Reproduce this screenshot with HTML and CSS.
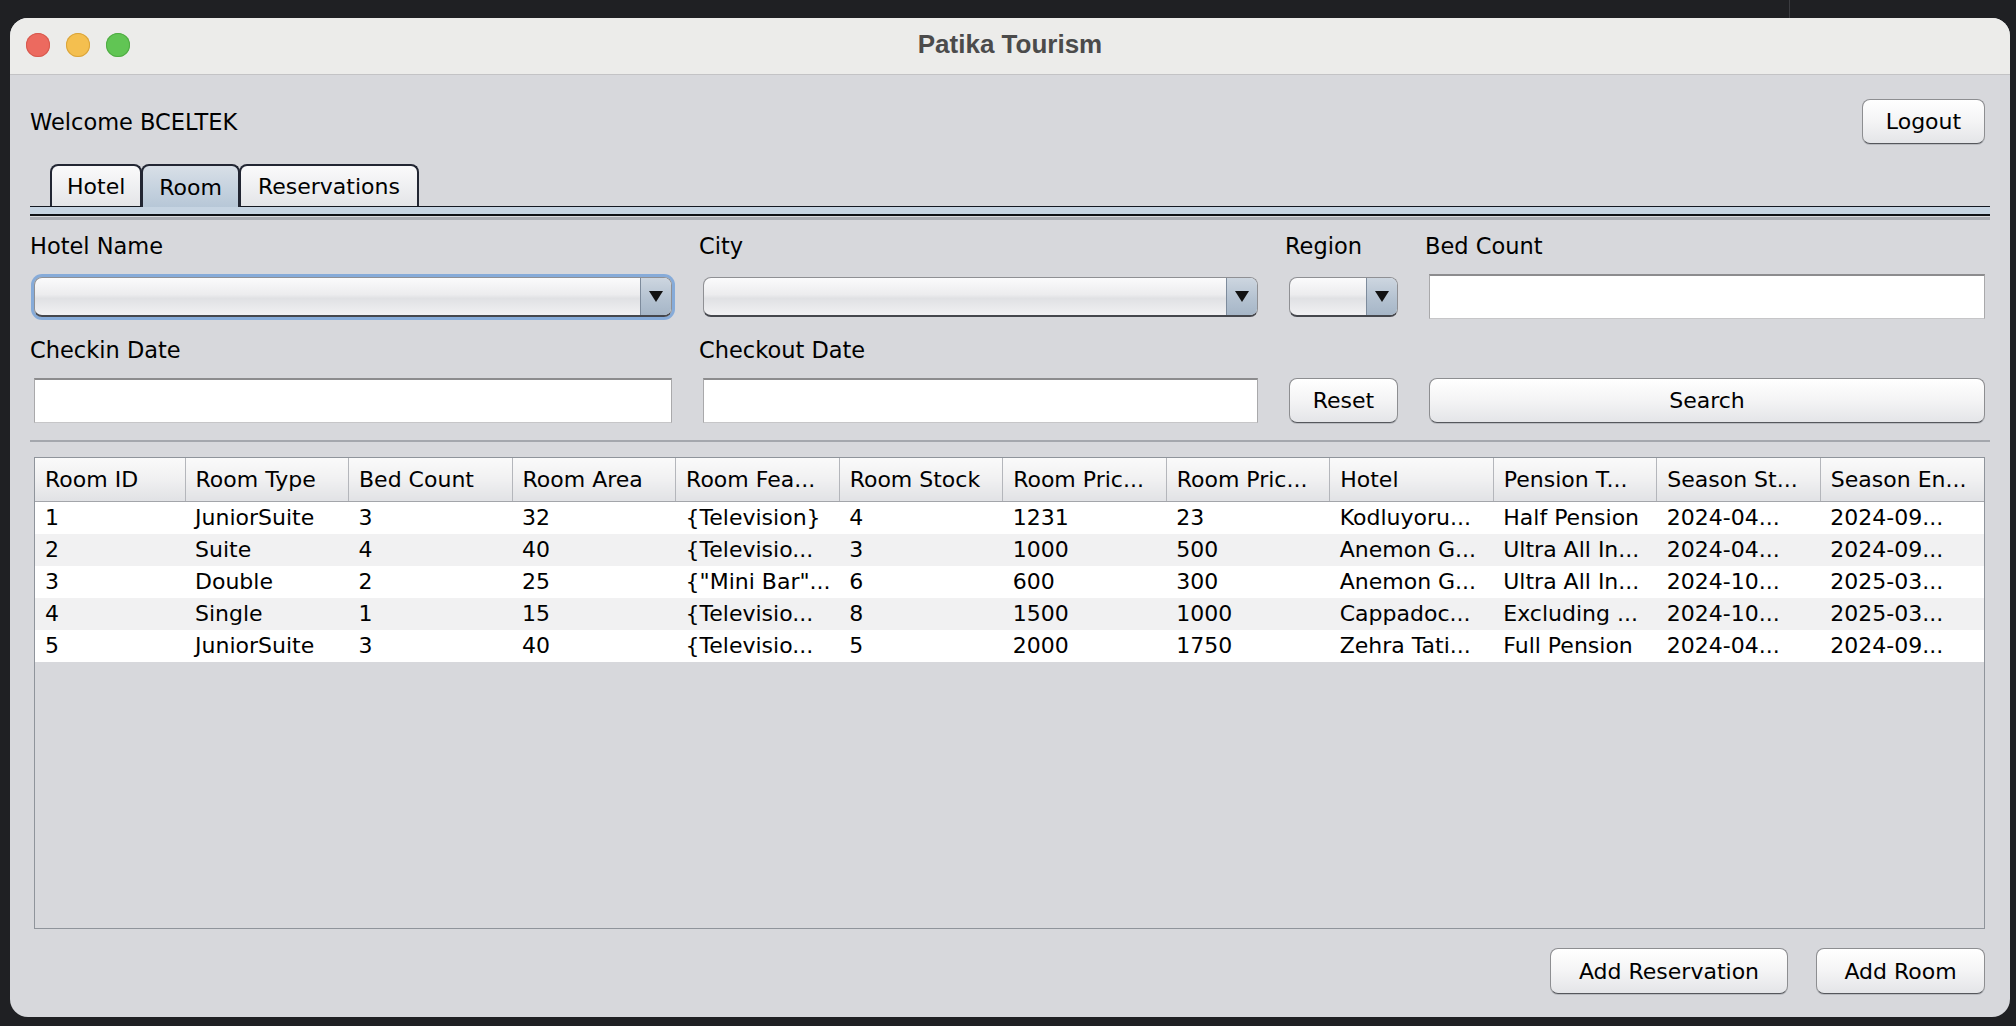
FILE: index.html
```html
<!DOCTYPE html>
<html lang="en">
<head>
<meta charset="utf-8">
<title>Patika Tourism</title>
<link rel="stylesheet" href="styles.css">
</head>
<body>
<div class="window">
  <div class="titlebar">
    <div class="lights">
      <span class="light red"></span>
      <span class="light yellow"></span>
      <span class="light green"></span>
    </div>
    <div class="title">Patika Tourism</div>
  </div>
  <div class="content">
    <div class="header-row">
      <div class="welcome">Welcome BCELTEK</div>
      <button class="btn logout">Logout</button>
    </div>

    <div class="tabs">
      <div class="tab">Hotel</div>
      <div class="tab sel">Room</div>
      <div class="tab">Reservations</div>
    </div>
    <div class="tabband"></div>

    <div class="form">
      <div class="lbl">Hotel Name</div>
      <div class="lbl">City</div>
      <div class="lbl">Region</div>
      <div class="lbl">Bed Count</div>

      <div class="combo focus"><span class="arrow"><i></i></span></div>
      <div class="combo"><span class="arrow"><i></i></span></div>
      <div class="combo"><span class="arrow"><i></i></span></div>
      <div class="field last"></div>

      <div class="lbl lbl2">Checkin Date</div>
      <div class="lbl lbl2">Checkout Date</div>
      <div></div>
      <div></div>

      <div class="field"></div>
      <div class="field"></div>
      <button class="btn ctl">Reset</button>
      <button class="btn ctl last">Search</button>
    </div>

    <div class="sep"></div>

    <div class="tablebox">
      <table class="grid">
        <colgroup>
          <col class="c-first">
          <col><col><col><col><col><col><col><col><col><col><col>
        </colgroup>
        <thead>
          <tr>
            <th>Room ID</th><th>Room Type</th><th>Bed Count</th><th>Room Area</th>
            <th>Room Fea...</th><th>Room Stock</th><th>Room Pric...</th><th>Room Pric...</th>
            <th>Hotel</th><th>Pension T...</th><th>Season St...</th><th>Season En...</th>
          </tr>
        </thead>
        <tbody>
          <tr>
            <td>1</td><td>JuniorSuite</td><td>3</td><td>32</td><td>{Television}</td><td>4</td>
            <td>1231</td><td>23</td><td>Kodluyoru...</td><td>Half Pension</td><td>2024-04...</td><td>2024-09...</td>
          </tr>
          <tr>
            <td>2</td><td>Suite</td><td>4</td><td>40</td><td>{Televisio...</td><td>3</td>
            <td>1000</td><td>500</td><td>Anemon G...</td><td>Ultra All In...</td><td>2024-04...</td><td>2024-09...</td>
          </tr>
          <tr>
            <td>3</td><td>Double</td><td>2</td><td>25</td><td>{"Mini Bar"...</td><td>6</td>
            <td>600</td><td>300</td><td>Anemon G...</td><td>Ultra All In...</td><td>2024-10...</td><td>2025-03...</td>
          </tr>
          <tr>
            <td>4</td><td>Single</td><td>1</td><td>15</td><td>{Televisio...</td><td>8</td>
            <td>1500</td><td>1000</td><td>Cappadoc...</td><td>Excluding ...</td><td>2024-10...</td><td>2025-03...</td>
          </tr>
          <tr>
            <td>5</td><td>JuniorSuite</td><td>3</td><td>40</td><td>{Televisio...</td><td>5</td>
            <td>2000</td><td>1750</td><td>Zehra Tati...</td><td>Full Pension</td><td>2024-04...</td><td>2024-09...</td>
          </tr>
        </tbody>
      </table>
    </div>

    <div class="actions">
      <button class="btn add-res">Add Reservation</button>
      <button class="btn add-room">Add Room</button>
    </div>
  </div>
</div>
</body>
</html>
```
FILE: styles.css
```css
* { box-sizing: border-box; }

html, body {
  margin: 0;
  padding: 0;
}

body {
  width: 2016px;
  height: 1026px;
  overflow: hidden;
  background:
    linear-gradient(to right, transparent 1789px, #3b3c40 1789px, #3b3c40 1790px, transparent 1790px) no-repeat 0 0 / 100% 18px,
    #1f2023;
  font-family: "DejaVu Sans", "Liberation Sans", sans-serif;
  font-size: 22px;
  color: #000;
}

.window {
  margin: 18px 0 0 10px;
  width: 2000px;
  height: 999px;
  border-radius: 18px;
  background: #d7d8dc;
  overflow: hidden;
  display: flex;
  flex-direction: column;
}

/* title bar */
.titlebar {
  height: 57px;
  flex: none;
  background: #ececea;
  border-bottom: 1px solid #c3c3c5;
  position: relative;
  display: flex;
  align-items: center;
  justify-content: center;
}

.lights {
  position: absolute;
  left: 16px;
  top: 15px;
  display: flex;
  gap: 16px;
}

.light {
  width: 24px;
  height: 24px;
  border-radius: 50%;
  display: block;
}
.light.red { background: #ec6a5f; box-shadow: inset 0 0 0 1px #d65a4f; }
.light.yellow { background: #f4bf4f; box-shadow: inset 0 0 0 1px #d9a43c; }
.light.green { background: #61c554; box-shadow: inset 0 0 0 1px #50ab44; }

.title {
  font-family: "Liberation Sans", Arial, sans-serif;
  font-weight: bold;
  font-size: 26px;
  color: #4b4b4b;
  padding-bottom: 3px;
}

/* content */
.content {
  flex: 1;
  display: flex;
  flex-direction: column;
  padding: 24px 20px 23px 20px;
}

.header-row {
  height: 45px;
  display: flex;
  align-items: center;
  justify-content: space-between;
}

.welcome {
  font-size: 22.5px;
}

.btn {
  font-family: "DejaVu Sans", "Liberation Sans", sans-serif;
  font-size: 22px;
  color: #000;
  background: linear-gradient(#ffffff, #f4f4f5 50%, #e4e5e8);
  border: 1px solid #8d8e91;
  border-bottom-color: #55575c;
  border-radius: 8px;
  box-shadow: 0 1px 0 #b9bbc0;
  padding: 0;
  margin: 0;
}

.logout {
  width: 123px;
  height: 45px;
  margin-right: 5px;
}

/* tabs */
.tabs {
  margin-top: 20px;
  height: 42px;
  display: flex;
  align-items: flex-start;
  padding-left: 20px;
  position: relative;
  z-index: 1;
}

.tab {
  height: 42px;
  padding: 1px 15px 0 15px;
  border: 2px solid #222633;
  border-bottom: none;
  border-radius: 8px 8px 0 0;
  background: linear-gradient(#fafafb, #e4e5e8);
  display: flex;
  align-items: center;
  font-size: 22px;
}

.tab + .tab { margin-left: -1px; }

.tab.sel {
  height: 43px;
  margin-bottom: -1px;
  padding: 1px 16px 0 16px;
  background: linear-gradient(#d8dfe7, #c4d1de 60%, #b7c7d7);
  position: relative;
  z-index: 2;
}

.tab:last-child { padding: 1px 17px 0 17px; }

.tabband {
  height: 10px;
  border-top: 1px solid #141821;
  background: #c6d4e2;
  border-bottom: 2px solid #0e1015;
  box-shadow: 0 1px 0 #d7d8dc, 0 4px 0 #a9acb3;
}

/* form */
.form {
  margin-top: 16px;
  display: grid;
  grid-template-columns: 646px 563px 117px 1fr;
  grid-template-rows: 42px 45px 59px 45px;
  column-gap: 23px;
}

.lbl {
  font-size: 22.5px;
  line-height: 28px;
  height: 28px;
  white-space: nowrap;
}

.lbl2 {
  margin-top: 17px;
}

.combo {
  align-self: center;
  height: 40px;
  margin: 0 4px;
  border: 1px solid #8f9094;
  border-bottom: 2px solid #45474d;
  border-radius: 8px;
  background: linear-gradient(#fbfbfc, #ececee 45%, #e0e1e4 55%, #f1f1f3);
  display: flex;
  justify-content: flex-end;
  overflow: hidden;
}

.combo.focus {
  box-shadow: 0 0 0 3px #86abd9;
}

.arrow {
  width: 31px;
  border-left: 1px solid #7d8b9c;
  background: linear-gradient(#cdd6e0, #b3c1d0 60%, #a6b6c7);
  display: flex;
  align-items: center;
  justify-content: center;
}

.arrow i {
  display: block;
  width: 0;
  height: 0;
  border-left: 7px solid transparent;
  border-right: 7px solid transparent;
  border-top: 11px solid #121212;
  margin-top: 1px;
}

.field {
  height: 45px;
  margin: 0 4px;
  background: #fff;
  border: 1px solid #a9a9ab;
  border-top: 2px solid #8c8c8e;
  border-bottom-color: #c6c6c8;
}

.field.last { margin-right: 5px; }

.ctl {
  height: 45px;
  margin: 0 4px;
}

.ctl.last { margin-right: 5px; }

.sep {
  margin-top: 17px;
  height: 2px;
  background: #a4a7ad;
}

/* table */
.tablebox {
  margin: 15px 5px 0 4px;
  height: 472px;
  border: 1px solid #8f949b;
  background: #d7d8dc;
  overflow: hidden;
}

.grid {
  width: 100%;
  table-layout: fixed;
  border-collapse: collapse;
}

.c-first { width: 150px; }

.grid th {
  height: 43px;
  text-align: left;
  font-weight: normal;
  font-size: 22px;
  padding: 0 0 0 10px;
  white-space: nowrap;
  overflow: hidden;
  background: linear-gradient(#fafafa, #f0f0f1 50%, #e1e2e5);
  border-left: 1px solid #b4b6bb;
  border-bottom: 1px solid #a3a5aa;
}

.grid th:first-child { border-left: none; }

.grid td {
  height: 32px;
  padding: 0 0 0 10px;
  white-space: nowrap;
  overflow: hidden;
  font-size: 22px;
  line-height: 32px;
}

.grid tbody tr:nth-child(odd) td { background: #ffffff; }
.grid tbody tr:nth-child(even) td { background: #f1f1f2; }

/* bottom buttons */
.actions {
  margin-top: 19px;
  display: flex;
  justify-content: flex-end;
  gap: 28px;
  padding-right: 5px;
}

.add-res { width: 238px; height: 46px; }
.add-room { width: 169px; height: 46px; }
```
